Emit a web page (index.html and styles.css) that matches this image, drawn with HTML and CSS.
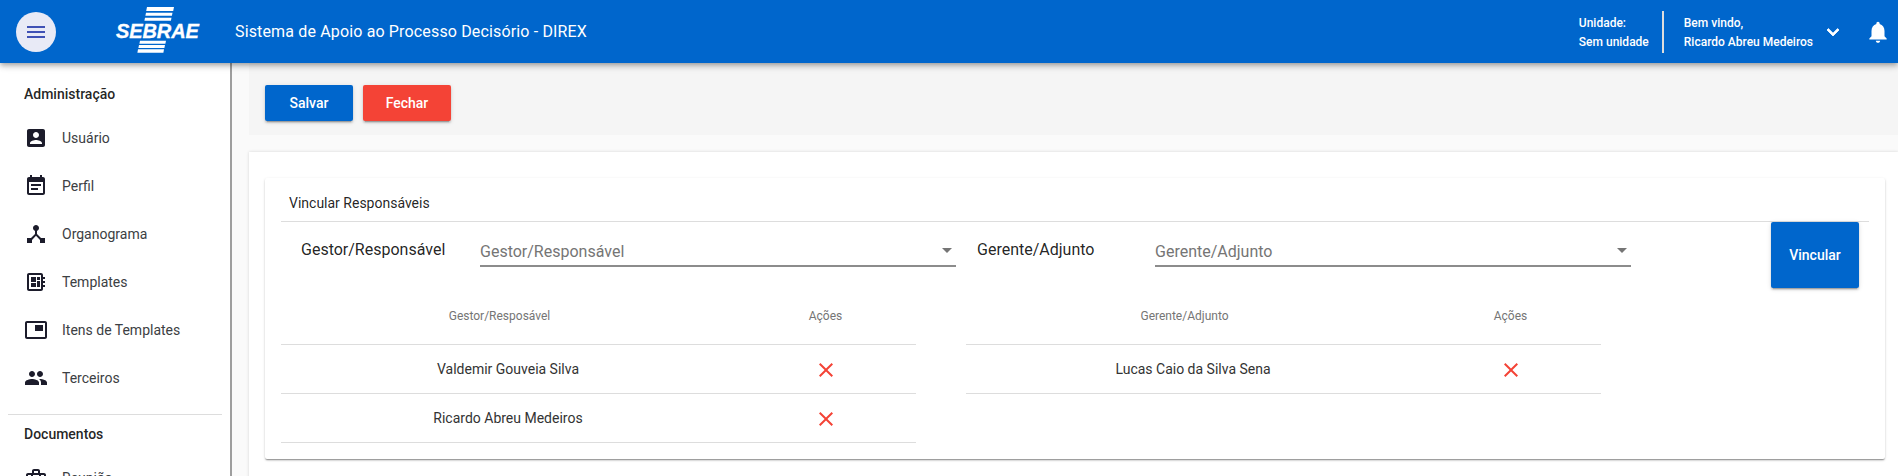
FILE: index.html
```html
<!DOCTYPE html>
<html lang="pt-BR">
<head>
  <meta charset="UTF-8" />
  <meta name="viewport" content="width=device-width, initial-scale=1.0" />
  <title>Sistema de Apoio ao Processo Decisório - DIREX</title>
  <link rel="stylesheet" href="styles.css">
</head>
<body>
  <header class="topbar">
    <button class="menu-btn" aria-label="menu">
      <svg viewBox="0 0 24 24" class="icon"><path d="M3 18h18v-2H3v2zm0-5h18v-2H3v2zm0-7v2h18V6H3z"/></svg>
    </button>
    <div class="logo">
      <svg class="logo-bars" viewBox="0 0 83 46">
        <path d="M31 0h27l-.8 4H30.200zM30 5.700h26.500l-.6 3H29.400zM29 10.700h26.500l-.6 3H28.400zM24 33.700h26l-.6 3H23.400zM23 38h26l-.6 3H22.400zM22 42.300h26l-.6 3.400H21.400z"/>
      </svg>
      <span class="logo-word">SEBRAE</span>
    </div>
    <div class="app-title">Sistema de Apoio ao Processo Decisório - DIREX</div>
    <div class="user-area">
      <div class="user-info unit">
        <span>Unidade:</span>
        <span>Sem unidade</span>
      </div>
      <div class="user-info welcome">
        <span>Bem vindo,</span>
        <span>Ricardo Abreu Medeiros</span>
      </div>
      <svg viewBox="0 0 24 24" class="icon chevron"><path d="M7.410 8.590 12 13.170l4.590-4.580L18 10l-6 6-6-6z"/></svg>
      <svg viewBox="0 0 24 24" class="icon bell"><path d="M12 22c1.100 0 2-.9 2-2h-4c0 1.100.9 2 2 2zm6-6v-5c0-3.070-1.630-5.640-4.500-6.320V4c0-.83-.67-1.500-1.500-1.500s-1.500.67-1.500 1.500v.68C7.640 5.360 6 7.920 6 11v5l-2 2v1h16v-1l-2-2z"/></svg>
    </div>
  </header>

  <div class="page">
    <nav class="sidebar">
      <h4 class="nav-title">Administração</h4>
      <a class="nav-item">
        <svg viewBox="0 0 24 24" class="icon"><path d="M3 5v14c0 1.100.89 2 2 2h14c1.100 0 2-.9 2-2V5c0-1.100-.9-2-2-2H5c-1.110 0-2 .9-2 2zm12 4c0 1.660-1.340 3-3 3s-3-1.340-3-3 1.340-3 3-3 3 1.340 3 3zm-9 8c0-2 4-3.100 6-3.100s6 1.100 6 3.100v1H6v-1z"/></svg>
        Usuário
      </a>
      <a class="nav-item">
        <svg viewBox="0 0 24 24" class="icon"><path d="M17 10H7v2h10v-2zm2-7h-1V1h-2v2H8V1H6v2H5c-1.110 0-1.990.9-1.990 2L3 19c0 1.100.89 2 2 2h14c1.100 0 2-.9 2-2V5c0-1.100-.9-2-2-2zm0 16H5V8h14v11zm-5-5H7v2h7v-2z"/></svg>
        Perfil
      </a>
      <a class="nav-item">
        <svg viewBox="0 0 24 24" class="icon"><path d="M17 16l-4-4V8.820C14.160 8.400 15 7.300 15 6c0-1.660-1.340-3-3-3S9 4.340 9 6c0 1.300.84 2.400 2 2.820V12l-4 4H3v5h5v-3.050l4-4.200 4 4.200V21h5v-5h-4z"/></svg>
        Organograma
      </a>
      <a class="nav-item">
        <svg viewBox="0 0 24 24" class="icon"><path d="M21 9V7h-2V5c0-1.100-.9-2-2-2H5c-1.100 0-2 .9-2 2v14c0 1.100.9 2 2 2h12c1.100 0 2-.9 2-2v-2h2v-2h-2v-2h2v-2h-2V9h2zm-4 10H5V5h12v14zM7 13h5v4H7zm6-6h3v3h-3zM7 7h5v5H7zm6 4h3v6h-3z"/></svg>
        Templates
      </a>
      <a class="nav-item">
        <svg viewBox="0 0 24 24" class="icon"><path d="M19 7h-8v6h8V7zm2-4H3c-1.100 0-2 .9-2 2v14c0 1.100.9 1.980 2 1.980h18c1.100 0 2-.88 2-1.980V5c0-1.100-.9-2-2-2zm0 16.010H3V4.980h18v14.030z"/></svg>
        Itens de Templates
      </a>
      <a class="nav-item">
        <svg viewBox="0 0 24 24" class="icon"><path d="M16 11c1.660 0 2.990-1.340 2.990-3S17.660 5 16 5c-1.660 0-3 1.340-3 3s1.340 3 3 3zm-8 0c1.660 0 2.990-1.340 2.990-3S9.660 5 8 5C6.340 5 5 6.340 5 8s1.340 3 3 3zm0 2c-2.330 0-7 1.170-7 3.500V19h14v-2.500c0-2.330-4.670-3.500-7-3.500zm8 0c-.29 0-.62.020-.97.050 1.160.84 1.970 1.970 1.970 3.450V19h6v-2.500c0-2.330-4.670-3.500-7-3.500z"/></svg>
        Terceiros
      </a>
      <hr class="nav-divider">
      <h4 class="nav-title">Documentos</h4>
      <a class="nav-item">
        <svg viewBox="0 0 24 24" class="icon"><path d="M20 7h-4V5c0-1.100-.9-2-2-2h-4c-1.100 0-2 .9-2 2v2H4c-1.100 0-2 .9-2 2v10c0 1.100.9 2 2 2h16c1.100 0 2-.9 2-2V9c0-1.100-.9-2-2-2zM10 5h4v2h-4V5zm10 14H4v-2h16v2zm0-5H4V9h3v2h2V9h6v2h2V9h3v5z"/></svg>
        Reunião
      </a>
    </nav>

    <main class="content">
      <div class="actions">
        <button class="btn btn-blue">Salvar</button>
        <button class="btn btn-red">Fechar</button>
      </div>

      <section class="outer">
        <div class="card">
          <div class="card-title">Vincular Responsáveis</div>
          <div class="card-body">
            <div class="form-row">
              <label class="field-label first">Gestor/Responsável</label>
              <div class="select first-select">
                <span>Gestor/Responsável</span>
                <i class="caret"></i>
              </div>
              <label class="field-label second">Gerente/Adjunto</label>
              <div class="select">
                <span>Gerente/Adjunto</span>
                <i class="caret"></i>
              </div>
              <button class="btn btn-blue btn-tall">Vincular</button>
            </div>
            <div class="tables">
              <table class="grid">
                <thead>
                  <tr><th class="name-col"><span>Gestor/Resposável</span></th><th>Ações</th></tr>
                </thead>
                <tbody>
                  <tr>
                    <td>Valdemir Gouveia Silva</td>
                    <td><svg viewBox="0 0 14 14" class="remove"><path d="M14 1.410 12.590 0 7 5.590 1.410 0 0 1.410 5.590 7 0 12.590 1.410 14 7 8.410 12.590 14 14 12.590 8.410 7z"/></svg></td>
                  </tr>
                  <tr>
                    <td>Ricardo Abreu Medeiros</td>
                    <td><svg viewBox="0 0 14 14" class="remove"><path d="M14 1.410 12.590 0 7 5.590 1.410 0 0 1.410 5.590 7 0 12.590 1.410 14 7 8.410 12.590 14 14 12.590 8.410 7z"/></svg></td>
                  </tr>
                </tbody>
              </table>
              <table class="grid">
                <thead>
                  <tr><th class="name-col"><span>Gerente/Adjunto</span></th><th>Ações</th></tr>
                </thead>
                <tbody>
                  <tr>
                    <td>Lucas Caio da Silva Sena</td>
                    <td><svg viewBox="0 0 14 14" class="remove"><path d="M14 1.410 12.590 0 7 5.590 1.410 0 0 1.410 5.590 7 0 12.590 1.410 14 7 8.410 12.590 14 14 12.590 8.410 7z"/></svg></td>
                  </tr>
                </tbody>
              </table>
            </div>
          </div>
        </div>
      </section>
    </main>
  </div>
</body>
</html>
```

FILE: styles.css
```css
* {
  box-sizing: border-box;
}

html, body {
  height: 100%;
  overflow: hidden;
}

body {
  margin: 0;
  background: #fafafa;
  color: rgba(0, 0, 0, 0.87);
  font-family: Roboto, "Liberation Sans", sans-serif;
  font-size: 14px;
  display: flex;
  flex-direction: column;
}

.icon {
  width: 24px;
  height: 24px;
  fill: currentColor;
  flex: none;
}

/* top bar */
.topbar {
  height: 63px;
  flex: none;
  background: #0066cc;
  color: white;
  display: flex;
  align-items: center;
  padding-left: 16px;
  position: relative;
  z-index: 2;
  box-shadow: 0 2px 4px -1px rgba(0, 0, 0, 0.2), 0 4px 5px 0 rgba(0, 0, 0, 0.14), 0 1px 10px 0 rgba(0, 0, 0, 0.12);
}

.menu-btn {
  width: 40px;
  height: 40px;
  border: none;
  border-radius: 50%;
  background: #e8eaf6;
  color: #3f51b5;
  padding: 8px;
  display: flex;
}

.logo {
  width: 83px;
  height: 46px;
  margin: 0 0 3px 60px;
  position: relative;
  flex: none;
}

.logo-bars {
  width: 83px;
  height: 46px;
  fill: white;
  display: block;
}

.logo-word {
  position: absolute;
  left: 0;
  top: 14px;
  font-family: "Liberation Sans", sans-serif;
  font-size: 20px;
  line-height: 20px;
  font-weight: 700;
  font-style: italic;
  letter-spacing: -0.1px;
  -webkit-text-stroke: 0.3px white;
}

.app-title {
  margin-left: 36px;
  font-size: 16px;
  letter-spacing: 0.15px;
}

.user-area {
  margin-left: auto;
  display: flex;
  align-items: center;
  font-size: 12px;
  font-weight: 500;
}

.user-info {
  display: flex;
  flex-direction: column;
  justify-content: center;
  gap: 4px;
  line-height: 15px;
  padding-top: 2px;
}

.unit {
  height: 42px;
  padding-right: 13px;
  border-right: 2px solid #ddd;
}

.welcome {
  padding-left: 20px;
}

.chevron {
  margin-left: 8px;
  stroke: white;
  stroke-width: 0.8;
}

.bell {
  width: 26px;
  height: 26px;
  margin: 0 7px 0 20px;
}

/* layout */
.page {
  flex: 1;
  display: flex;
  min-height: 0;
}

.sidebar {
  width: 232px;
  flex: none;
  background: white;
  border-right: 2px solid #9e9e9e;
  padding: 22px 8px 0;
  color: #3c4043;
  overflow: hidden;
}

.nav-title {
  margin: 0 0 11px 16px;
  font-size: 14px;
  font-weight: 500;
  line-height: 18px;
  color: rgba(0, 0, 0, 0.87);
}

.nav-item {
  height: 48px;
  display: flex;
  align-items: center;
  gap: 14px;
  padding-left: 16px;
}

.nav-item .icon {
  color: #1c1c2b;
}

.nav-divider {
  border: none;
  border-top: 1px solid #ddd;
  margin: 12px 0 10px;
}

.content {
  flex: 1;
  min-width: 0;
  padding-left: 17px;
}

.actions {
  height: 72px;
  background: #f5f5f5;
  display: flex;
  gap: 10px;
  padding: 22px 0 0 16px;
}

.btn {
  width: 88px;
  height: 36px;
  border: none;
  border-radius: 2px;
  color: white;
  font-family: inherit;
  font-size: 14px;
  font-weight: 500;
  padding: 0;
  box-shadow: 0 3px 1px -2px rgba(0, 0, 0, 0.2), 0 2px 2px 0 rgba(0, 0, 0, 0.14), 0 1px 5px 0 rgba(0, 0, 0, 0.12);
}

.btn-blue {
  background: #0066cc;
}

.btn-red {
  background: #f44336;
}

.btn-tall {
  height: 66px;
  flex: none;
  margin-left: 140px;
}

/* card */
.outer {
  margin-top: 17px;
  height: 400px;
  background: white;
  padding: 26px 13px 0 16px;
  box-shadow: 0 0 3px rgba(0, 0, 0, 0.15);
}

.card {
  height: 281px;
  background: white;
  border-radius: 2px;
  padding: 0 16px;
  box-shadow: 0 2px 2px -1px rgba(0, 0, 0, 0.3), 0 1px 1px 0 rgba(0, 0, 0, 0.14), 0 1px 3px 0 rgba(0, 0, 0, 0.14);
}

.card-title {
  height: 44px;
  padding: 7px 0 0 8px;
  display: flex;
  align-items: center;
  border-bottom: 1px solid #ddd;
}

.form-row {
  display: flex;
  align-items: flex-start;
  height: 66px;
}

.field-label {
  font-size: 16px;
  line-height: 20px;
  margin-top: 18px;
  flex: none;
}

.first {
  margin-left: 20px;
  width: 179px;
}

.second {
  margin-left: 21px;
  width: 178px;
}

.select {
  width: 476px;
  height: 45px;
  flex: none;
  border-bottom: 2px solid #8c8c8c;
  color: #757575;
  font-size: 16px;
  line-height: 20px;
  padding-top: 20px;
  display: flex;
  justify-content: space-between;
}

.caret {
  width: 0;
  height: 0;
  margin: 6px 4px 0 0;
  border-left: 5px solid transparent;
  border-right: 5px solid transparent;
  border-top: 5px solid #757575;
}

.tables {
  display: flex;
  align-items: flex-start;
  gap: 50px;
}

.grid {
  width: 635px;
  table-layout: fixed;
  border-collapse: collapse;
  text-align: center;
}

.grid th {
  height: 56px;
  font-size: 12px;
  font-weight: 400;
  color: #757575;
  border-bottom: 1px solid #ddd;
}

.grid th.name-col {
  width: 454px;
  padding-right: 18px;
}

.grid td {
  height: 49px;
  padding: 0;
  border-bottom: 1px solid #ddd;
  color: #333;
}

.remove {
  width: 14px;
  height: 14px;
  fill: #f44336;
  display: block;
  margin: 2px auto 0;
}
```
